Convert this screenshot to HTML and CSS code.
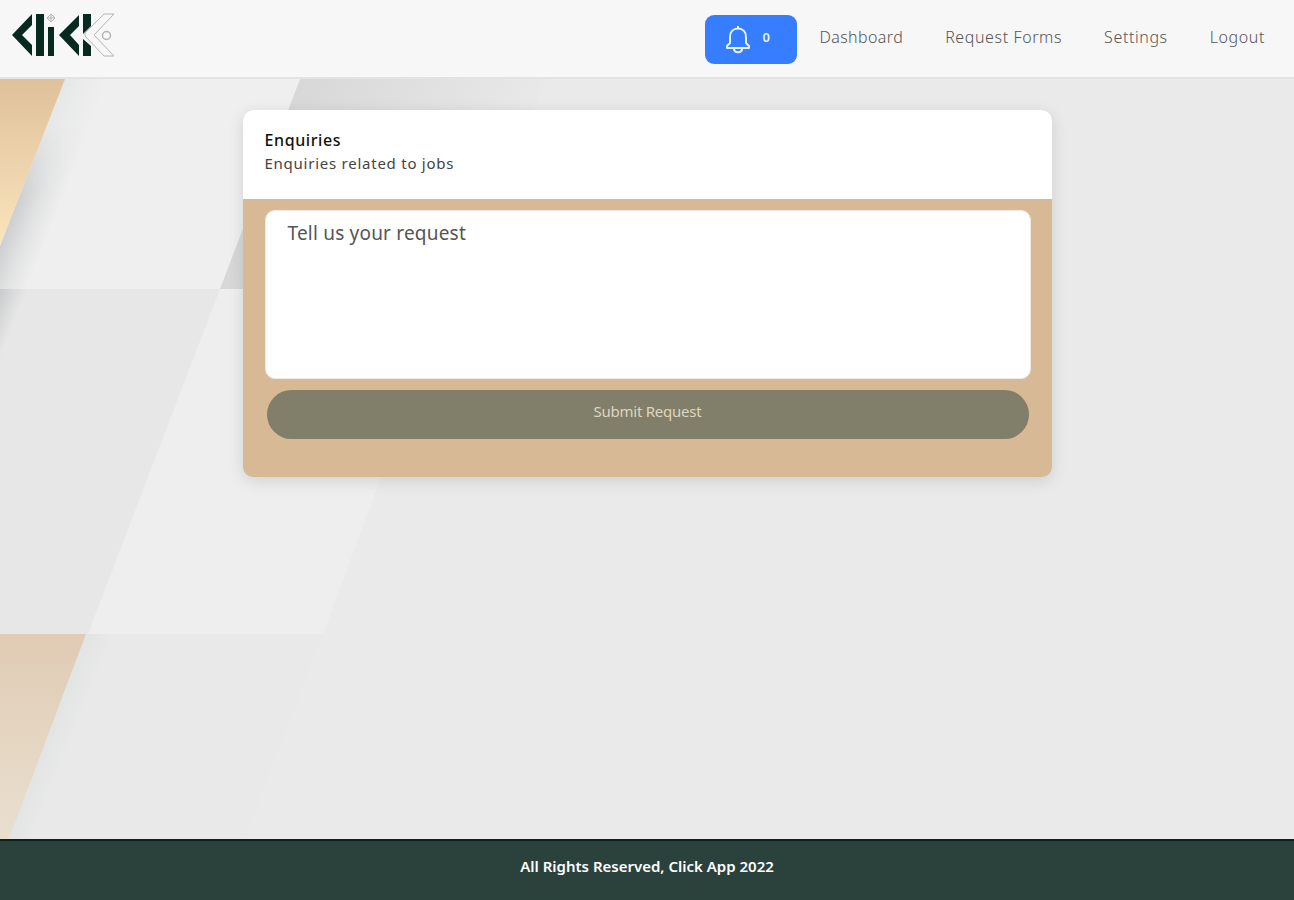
FILE: index.html
```
<!DOCTYPE html>
<html lang="en">

<head>
    <meta charset="UTF-8">
    <meta name="viewport" content="width=device-width, initial-scale=1.0">
    <title>Click - Enquiries</title>
    <link rel="stylesheet" href="styles.css">
</head>

<body>

    <header class="navbar">
        <a class="logo" href="#" aria-label="Click">
            <svg width="106" height="48" viewBox="0 0 106 48">
                <g fill="#08291f">
                    <path d="M21 4v11l-10 10 10 10v11L1 25z" />
                    <path d="M25 4h8v42h-8zM37 17h6v29h-6z" />
                    <path d="M68 5v11l-9 9 9 10v11L48 25z" />
                    <path d="M72 4h8v12l-8 8zM72 29l8 7v10h-8z" />
                </g>
                <g fill="none" stroke="#b2b5b4">
                    <path d="M40 4l4 4-4 4-4-4zM40 4v8M36 8h8" />
                    <path d="M93 4h10L83 25l20 21H93L74 26v-3z" />
                    <circle cx="95.500" cy="25.500" r="4" stroke-width="1.500" />
                </g>
            </svg>
        </a>
        <nav class="nav-links">
            <button class="bell-btn" aria-label="Notifications">
                <svg width="26" height="30" viewBox="0 0 26 30" fill="none" stroke="#e5f2ff" stroke-width="2" stroke-linejoin="round">
                    <path d="M13 1v3M2 23v-2l3-3v-6c0-5 3-8.500 8-8.500s8 3.500 8 8.500v6l3 3v2z" />
                    <path d="M9 23.500c0 5 8 5 8 0" />
                </svg>
                <span class="count">0</span>
            </button>
            <a class="dashboard" href="#">Dashboard</a>
            <a class="forms" href="#">Request Forms</a>
            <a class="settings" href="#">Settings</a>
            <a class="logout" href="#">Logout</a>
        </nav>
    </header>

    <main class="content">
        <svg class="backdrop" viewBox="0 79 1294 760" preserveAspectRatio="none" aria-hidden="true">
            <defs>
                <linearGradient id="gold" x1="0" y1="0" x2="0" y2="1">
                    <stop offset="0" stop-color="#dfc19b" />
                    <stop offset="1" stop-color="#fae4bd" />
                </linearGradient>
                <linearGradient id="sand" x1="0" y1="0" x2="0" y2="1">
                    <stop offset="0" stop-color="#e0cbb4" />
                    <stop offset="1" stop-color="#e9dfcf" />
                </linearGradient>
                <linearGradient id="shade" gradientUnits="userSpaceOnUse" x1="260" y1="120" x2="520" y2="215">
                    <stop offset="0" stop-color="#d6d6d6" />
                    <stop offset="1" stop-color="#eaeaea" />
                </linearGradient>
                <linearGradient id="edge" gradientUnits="userSpaceOnUse" x1="45" y1="130" x2="62" y2="187">
                    <stop offset="0" stop-color="#e6e7e7" />
                    <stop offset="1" stop-color="#cccecf" />
                </linearGradient>
                <linearGradient id="edgeFade" gradientUnits="userSpaceOnUse" x1="28" y1="174" x2="66" y2="189">
                    <stop offset="0" stop-color="#efefef" stop-opacity="0" />
                    <stop offset=".5" stop-color="#efefef" stop-opacity=".6" />
                    <stop offset="1" stop-color="#efefef" />
                </linearGradient>
                <linearGradient id="edgeLow" gradientUnits="userSpaceOnUse" x1="-7" y1="300" x2="19" y2="310">
                    <stop offset="0" stop-color="#c6c8c9" />
                    <stop offset="1" stop-color="#e7e7e7" />
                </linearGradient>
                <linearGradient id="edgeFoot" gradientUnits="userSpaceOnUse" x1="18" y1="815" x2="38" y2="823">
                    <stop offset="0" stop-color="#e3e4e4" />
                    <stop offset="1" stop-color="#e9e9e9" />
                </linearGradient>
            </defs>
            <path fill="#eaeaea" d="M0 79h1294v760H0z" />
            <path fill="url(#shade)" d="M300 79h245L465 289H220z" />
            <path fill="url(#edge)" d="M65 79h235l-80 210H0V246z" />
            <path fill="url(#edgeFade)" d="M65 79h235l-80 210H0V246z" />
            <path fill="url(#edgeLow)" d="M0 289h220L88 634H0z" />
            <path fill="#eee" d="M220 289h231L323 634H88z" />
            <path fill="url(#edgeFoot)" d="M86 634h237l-78 205H9z" />
            <path fill="url(#gold)" d="M0 79h65L0 246z" />
            <path fill="url(#sand)" d="M0 634h86L9 839H0z" />
        </svg>

        <section class="card">
            <div class="card-header">
                <h1>Enquiries</h1>
                <p>Enquiries related to jobs</p>
            </div>
            <form class="card-body">
                <textarea placeholder="Tell us your request"></textarea>
                <button class="submit-btn" type="button">Submit Request</button>
            </form>
        </section>
    </main>

    <footer class="footer">All Rights Reserved, Click App 2022</footer>

</body>

</html>
```
FILE: styles.css
```
* {
    box-sizing: border-box;
}

body {
    margin: 0;
    height: 100vh;
    display: flex;
    flex-direction: column;
    font-family: "Noto Sans", "Open Sans", sans-serif;
    overflow: hidden;
}

.navbar {
    height: 79px;
    display: flex;
    justify-content: space-between;
    align-items: flex-start;
    padding: 10px 29px 0 11px;
    background-color: #f7f7f7;
    border-bottom: 2px solid #e3e3e3;
}

.logo {
    line-height: 0;
}

.nav-links {
    display: flex;
    align-items: flex-start;
    padding-top: 5px;
}

.nav-links a {
    color: #555;
    font-size: 16px;
    font-weight: 300;
    line-height: 22px;
    margin-top: 11px;
    margin-left: 42px;
    letter-spacing: 0.6px;
    text-decoration: none;
    white-space: nowrap;
}

.nav-links .dashboard {
    margin-left: 22px;
    letter-spacing: 0.4px;
}

.bell-btn {
    width: 92px;
    height: 49px;
    display: flex;
    align-items: flex-start;
    gap: 11px;
    padding: 10px 0 0 20px;
    background-color: #367eff;
    color: #e5f2ff;
    border: none;
    border-radius: 9px;
    font-family: inherit;
    cursor: pointer;
}

.count {
    font-size: 13px;
    font-weight: 600;
    line-height: 24px;
}

.content {
    position: relative;
    flex: 1;
    padding-top: 31px;
}

.backdrop {
    position: absolute;
    top: 0;
    left: 0;
    width: 100%;
    height: 100%;
}

.card {
    position: relative;
    width: 809px;
    height: 367px;
    margin: 0 auto;
    background-color: #d7b995;
    border-radius: 10px;
    box-shadow: 0 4px 16px rgba(0, 0, 0, 0.12);
    overflow: hidden;
}

.card-header {
    height: 89px;
    padding: 19px 22px 0;
    background-color: #fff;
}

.card-header h1 {
    margin: 0;
    color: #111;
    font-size: 16px;
    font-weight: 500;
    line-height: 23px;
    letter-spacing: 0.6px;
}

.card-header p {
    margin: 0;
    color: #444;
    font-size: 15px;
    line-height: 23px;
    letter-spacing: 0.75px;
}

.card-body {
    display: flex;
    flex-direction: column;
    padding: 11px 21px 0 22px;
}

textarea {
    height: 169px;
    padding: 9px 22px;
    border: 1px solid #f1e9e3;
    border-radius: 10px;
    background-color: #fff;
    font-family: inherit;
    font-size: 19px;
    line-height: 27px;
    letter-spacing: 0.2px;
    resize: none;
}

textarea::placeholder {
    color: #555;
}

.submit-btn {
    height: 49px;
    margin: 11px 2px 0;
    padding: 0 0 7px;
    background-color: #817e69;
    color: #ded5c1;
    border: none;
    border-radius: 25px;
    font-family: inherit;
    font-size: 15px;
    letter-spacing: -0.25px;
    cursor: pointer;
}

.footer {
    height: 61px;
    padding-top: 13px;
    background-color: #2a413c;
    border-top: 2px solid #09231d;
    color: #fff;
    font-size: 15px;
    font-weight: 600;
    line-height: 24px;
    text-align: center;
}
```
